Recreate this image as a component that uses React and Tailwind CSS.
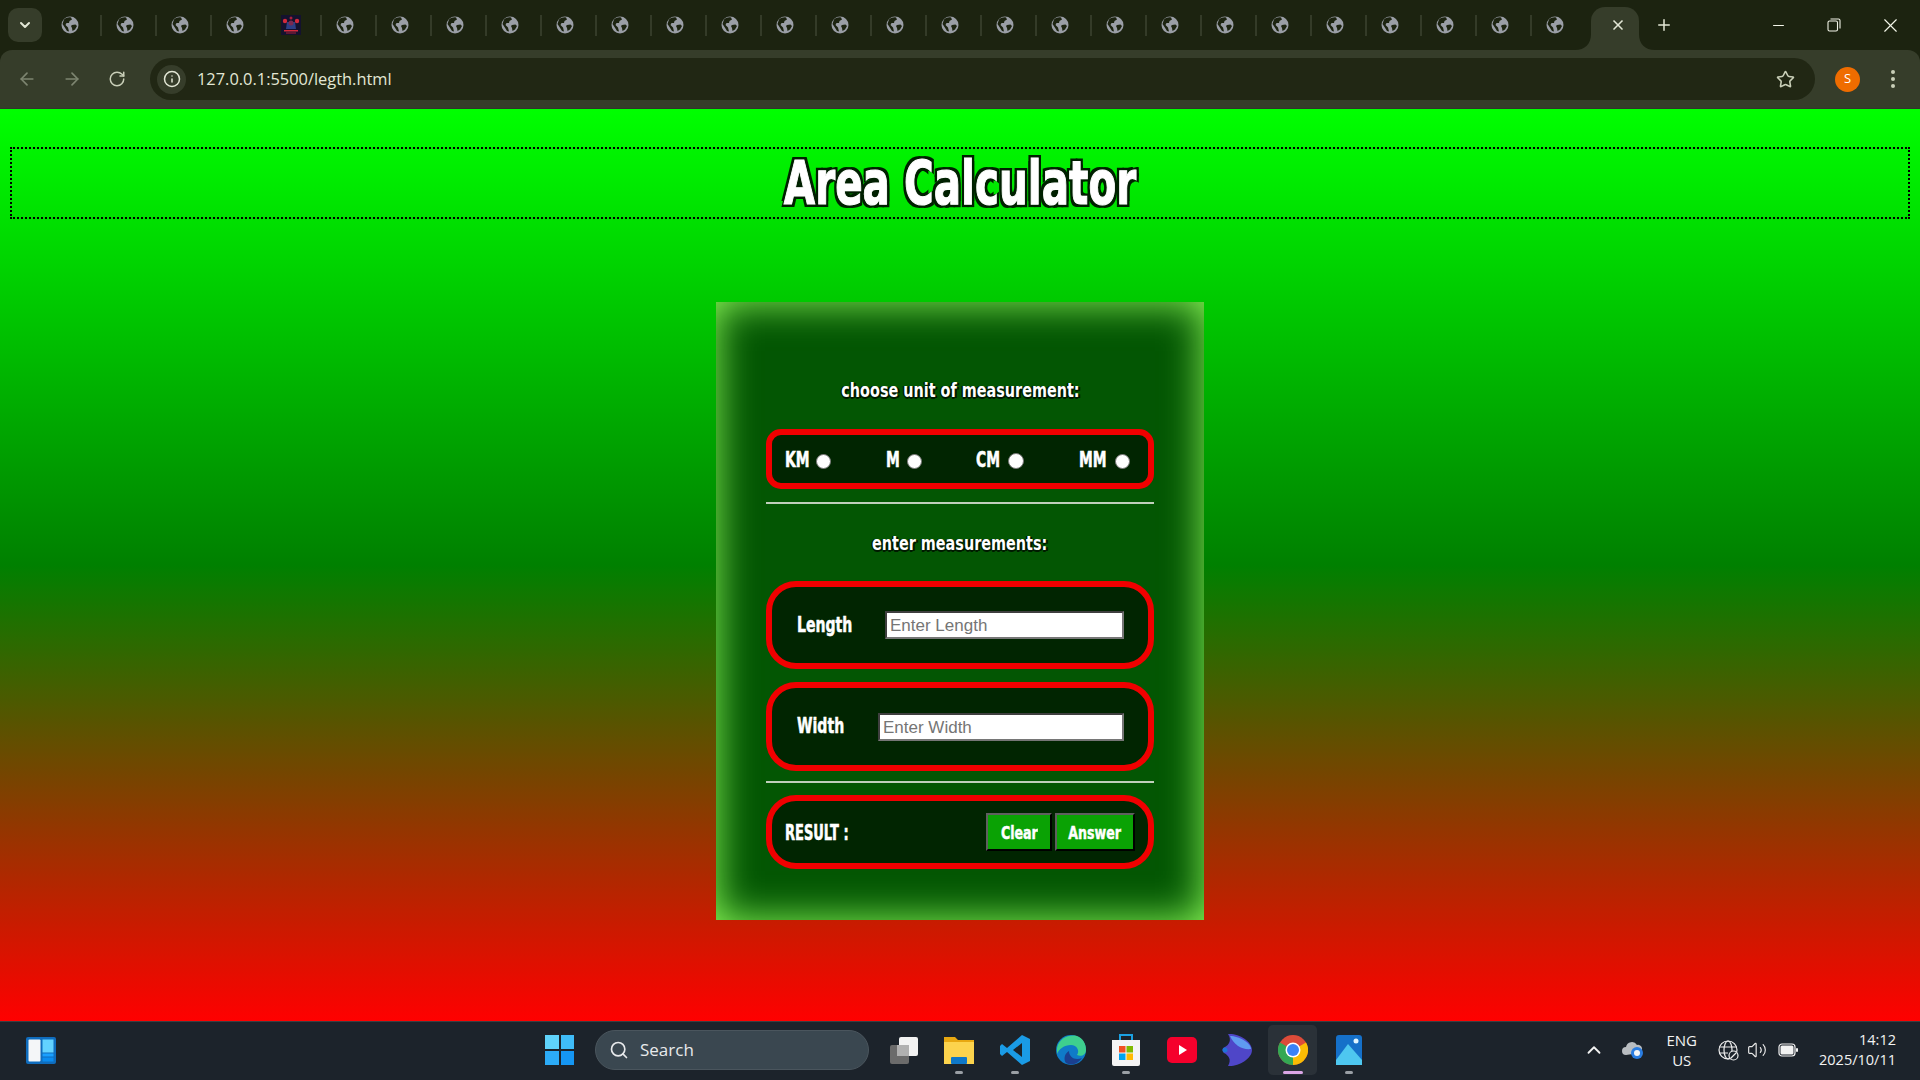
import { ArrowLeft, ArrowRight, RotateCw, Info, Star, X, Plus, Minus, ChevronDown, ChevronUp, Search, Volume2 } from "lucide-react";

// no Impact here: DejaVu bold squeezed sideways comes closest
const IMPACT = "font-['DejaVu_Sans',sans-serif] font-bold whitespace-nowrap";

function Globe() {
  return (
    <svg width="18" height="18" viewBox="0 0 18 18">
      <circle cx="9" cy="9" r="8.5" fill="#9a9ea6" />
      <path d="M3 3.5 C5 1.5 8 1 10 1.5 L11 3.5 L8.5 5 L8 7 L5.5 7 L4.5 9 L7 11.5 L8 15.5 L6 15 L3.5 11 L1.5 8 Z" fill="#1c2310" />
      <path d="M11 9 L14.5 8.5 L16 10 L14 13.5 L11.5 15 L11 12 L10 10 Z" fill="#1c2310" />
    </svg>
  );
}

function GameIcon() {
  return (
    <svg width="20" height="20" viewBox="0 0 20 20">
      <rect width="20" height="20" fill="#14122e" />
      <circle cx="4" cy="6" r="2.2" fill="#d42a3c" />
      <circle cx="16" cy="6" r="2.2" fill="#d42a3c" />
      <circle cx="10" cy="3" r="1.5" fill="#a81f3a" />
      <path d="M6 7h8l1 7H5z" fill="#2d3f86" />
      <circle cx="10" cy="8" r="2.5" fill="#7a2a50" />
      <rect x="3" y="15" width="14" height="1.5" fill="#d42a3c" />
      <rect x="5" y="17.5" width="10" height="1" fill="#a81f3a" />
    </svg>
  );
}

function Tabs() {
  const cells = Array.from({ length: 28 }, (_, i) => i);
  return (
    <div className="h-[50px] bg-[#1c2310] flex items-center">
      <div className="ml-2 mr-[5px] w-[34px] h-[34px] rounded-[10px] bg-[#363d2a] flex items-center justify-center">
        <ChevronDown size={16} strokeWidth={3} color="#e3e7d5" />
      </div>
      {cells.map((i) => (
        <div key={i} className={i < 27 ? "w-[55px] h-[21px] pl-[14px] flex items-center border-r-2 border-[#343b28]" : "w-[55px] h-[21px] pl-[14px] flex items-center"}>
          {i === 4 ? <GameIcon /> : <Globe />}
        </div>
      ))}
      <div className="relative ml-1 mt-[7px] w-[48px] h-[43px] pb-[7px] pl-[6px] bg-[#363d2a] rounded-t-[14px] flex items-center justify-center">
        <svg className="absolute bottom-0 -left-4" width="16" height="16" viewBox="0 0 16 16"><path d="M16 0 V16 H0 C10 16 16 10 16 0Z" fill="#363d2a" /></svg>
        <svg className="absolute bottom-0 -right-4" width="16" height="16" viewBox="0 0 16 16"><path d="M0 0 V16 H16 C6 16 0 10 0 0Z" fill="#363d2a" /></svg>
        <X size={16} strokeWidth={2.5} color="#e3e7d5" />
      </div>
      <div className="ml-[15px] w-[20px] flex justify-center">
        <Plus size={18} strokeWidth={2} color="#e3e7d5" />
      </div>
      <div className="ml-auto flex items-center">
        <div className="w-[56px] flex justify-center"><Minus size={17} strokeWidth={1.5} color="#f2f4e8" /></div>
        <div className="w-[56px] flex justify-center">
          <svg width="14" height="14" viewBox="0 0 14 14" fill="none" stroke="#f2f4e8" strokeWidth="1.1">
            <rect x="1" y="3" width="9.5" height="10" rx="1.5" />
            <path d="M3.5 1h8a1.5 1.5 0 0 1 1.5 1.5v8" />
          </svg>
        </div>
        <div className="w-[58px] pr-[2px] flex justify-center"><X size={23} strokeWidth={1.2} color="#f2f4e8" /></div>
      </div>
    </div>
  );
}

function Toolbar() {
  return (
    <div className="h-[59px] bg-[#363d2a] rounded-t-[12px] border-b border-[#30362a] flex items-center">
      <div className="w-[54px] flex justify-center"><ArrowLeft size={20} color="#7d8570" /></div>
      <div className="w-[36px] flex justify-center"><ArrowRight size={20} color="#7d8570" /></div>
      <div className="w-[54px] flex justify-center"><RotateCw size={18} color="#c9cfb8" /></div>
      <div className="ml-[6px] w-[1665px] h-[42px] rounded-full bg-[#212714] flex items-center pl-[7px] pr-[20px]">
        <div className="w-[29px] h-[29px] rounded-full bg-[#363d2a] flex items-center justify-center">
          <Info size={18} color="#e3e7d5" />
        </div>
        <span className="ml-[11px] text-[16.4px] text-[#e3e7d5] font-['Open_Sans',sans-serif]">127.0.0.1:5500/legth.html</span>
        <Star className="ml-auto" size={19} strokeWidth={2} color="#c9cfb8" />
      </div>
      <div className="ml-[20px] w-[25px] h-[25px] rounded-full bg-[#ef6c00] flex items-center justify-center text-white text-[13px] font-['Open_Sans',sans-serif]">S</div>
      <div className="ml-[31px] flex flex-col gap-[3px]">
        <span className="w-1 h-1 rounded-full bg-[#c9cfb8]"></span>
        <span className="w-1 h-1 rounded-full bg-[#c9cfb8]"></span>
        <span className="w-1 h-1 rounded-full bg-[#c9cfb8]"></span>
      </div>
    </div>
  );
}

function Heading({ children, className }) {
  return (
    <div className={`h-[28px] flex items-center justify-center ${className}`}>
      <p className={`${IMPACT} shrink-0 text-[20px] scale-x-[0.72] text-white [text-shadow:3px_1px_0_#001a00,-2px_0_0_#001a00,0_2px_0_#001a00]`}>
        {children}
      </p>
    </div>
  );
}

function Unit({ label, width, radio }) {
  return (
    <label className="flex items-center gap-[7px]">
      <span className={`${IMPACT} ${width} mt-[4px] text-[21px] origin-left scale-x-[0.66] text-white [-webkit-text-stroke:0.6px_#fff]`}>{label}</span>
      <input type="radio" name="unit" className={`${radio} appearance-none mt-[4px] rounded-full bg-white border border-[#777]`} />
    </label>
  );
}

function Field({ label, placeholder, inputWidth, labelWidth, height, className }) {
  return (
    <div className={`${className} ${height} border-[6px] border-[#f00000] rounded-[30px] bg-[#012501] flex items-center justify-between pl-[25px] pr-[24px]`}>
      <span className={`${IMPACT} ${labelWidth} text-[22px] origin-left scale-x-[0.64] text-white -mt-[2px] [-webkit-text-stroke:0.6px_#fff]`}>{label}</span>
      <input
        placeholder={placeholder}
        className={`${inputWidth} h-[28px] bg-white border-2 border-t-[#3f3f3f] border-l-[#3f3f3f] border-r-[#767676] border-b-[#767676] pl-[3px] pr-[2px] pt-[2px] text-[17px] text-black font-['Liberation_Sans',sans-serif] placeholder:text-[#757575] outline-none`}
      />
    </div>
  );
}

function ResultButton({ label, width }) {
  return (
    <button className={`${width} h-[38px] bg-[#0aa204] border-2 border-t-[#5f5f5f] border-l-[#5f5f5f] border-r-black border-b-black flex items-center justify-center`}>
      <span className={`${IMPACT} shrink-0 text-[18px] scale-x-[0.7] text-white [-webkit-text-stroke:0.5px_#fff]`}>{label}</span>
    </button>
  );
}

function Panel() {
  return (
    <div className="mx-auto mt-[83px] w-[488px] h-[618px] bg-[#035603] shadow-[inset_0_0_40px_#8fff5a] flex flex-col px-[50px] pt-[74px]">
      <Heading>choose unit of measurement:</Heading>
      <div className="mt-[25px] h-[60px] border-[6px] border-[#f00000] rounded-[15px] bg-[#012501] flex items-center justify-between pl-[13px] pr-[18px]">
        <Unit label="KM" width="w-[24px]" radio="w-[15px] h-[15px]" />
        <Unit label="M" width="w-[14px]" radio="w-[15px] h-[15px]" />
        <Unit label="CM" width="w-[25px]" radio="w-[16px] h-[16px]" />
        <Unit label="MM" width="w-[29px]" radio="w-[15px] h-[15px]" />
      </div>
      <div className="mt-[13px] h-[2px] bg-[#c0cfbc]"></div>
      <Heading className="mt-[25px]">enter measurements:</Heading>
      <Field className="mt-[24px]" height="h-[88px]" label="Length" labelWidth="w-[55px]" placeholder="Enter Length" inputWidth="w-[239px]" />
      <Field className="mt-[13px]" height="h-[89px]" label="Width" labelWidth="w-[49px]" placeholder="Enter Width" inputWidth="w-[246px]" />
      <div className="mt-[10px] h-[2px] bg-[#c0cfbc]"></div>
      <div className="mt-[12px] h-[74px] border-[6px] border-[#f00000] rounded-[30px] bg-[#012501] flex items-center justify-between pl-[13px] pr-[13px]">
        <span className={`${IMPACT} w-[63px] mt-[4px] text-[21px] origin-left scale-x-[0.62] text-white [-webkit-text-stroke:0.6px_#fff]`}>RESULT :</span>
        <div className="flex gap-[3px]">
          <ResultButton label="Clear" width="w-[66px]" />
          <ResultButton label="Answer" width="w-[80px]" />
        </div>
      </div>
    </div>
  );
}

function TaskIcon({ children, mark, active }) {
  return (
    <div className={active ? "relative w-[49px] h-[50px] rounded-[5px] bg-[#2a3138] flex items-center justify-center mx-[3.3px]" : "relative w-[49px] h-[50px] flex items-center justify-center mx-[3.3px]"}>
      {children}
      {mark && <span className={active ? "absolute bottom-[1px] w-5 h-[3px] rounded-full bg-[#dba6e6]" : "absolute bottom-[1px] w-[8px] h-[3px] rounded-full bg-[#9a9fa5]"}></span>}
    </div>
  );
}

function Taskbar() {
  return (
    <div className="h-[59px] bg-[#1c232b] border-t border-[#3a3f44] pb-[2px] flex items-center text-white font-['Open_Sans',sans-serif]">
      <svg className="ml-[26px]" width="30" height="27" viewBox="0 0 30 27">
        <rect width="30" height="27" rx="2" fill="#0f6cbd" />
        <rect x="2.5" y="2.5" width="12" height="22" rx="1" fill="#f4f6f8" />
        <rect x="16.5" y="2.5" width="11" height="13" fill="#62d2ff" />
        <rect x="16.5" y="16.5" width="11" height="3" fill="#1aa0ff" />
        <rect x="16.5" y="20.5" width="11" height="4" fill="#0a8cf0" />
      </svg>

      <div className="ml-[489px] w-[29px] grid grid-cols-2 gap-[2px]">
        <span className="h-[14px] bg-[#5fd3fb]"></span>
        <span className="h-[14px] bg-[#3fbcf8]"></span>
        <span className="h-[14px] bg-[#2cabf7]"></span>
        <span className="h-[14px] bg-[#1596f3]"></span>
      </div>

      <div className="ml-[21px] w-[274px] h-[40px] rounded-full bg-[#3a4750] border border-[#4a555d] flex items-center pl-[13px] gap-[11px]">
        <Search size={20} color="#e8eaec" />
        <span className="text-[17px] text-[#e8eaec]">Search</span>
      </div>

      <div className="ml-[7px] flex items-center">
        <TaskIcon>
          <svg width="30" height="30" viewBox="0 0 30 30">
            <rect x="1" y="10" width="19" height="19" rx="2" fill="#6b6b6b" />
            <rect x="10" y="2" width="19" height="19" rx="2" fill="#f2f2f2" />
            <rect x="8" y="10" width="12" height="11" fill="#b0b0b0" />
          </svg>
        </TaskIcon>
        <TaskIcon mark>
          <svg width="32" height="30" viewBox="0 0 32 30">
            <path d="M1 2h11l3 3h16v24H1z" fill="#e8a811" />
            <path d="M1 7h30v22H1z" fill="#fcd34d" />
            <rect x="8" y="22" width="16" height="7" rx="1" fill="#0f78c8" />
          </svg>
        </TaskIcon>
        <TaskIcon mark>
          <svg width="32" height="32" viewBox="0 0 32 32">
            <path d="M23 1 L31 5 V27 L23 31 L8 18 L3 22 L1 20 V12 L3 10 L8 14 Z M23 9 L14 16 L23 23 Z" fill="#1a9be6" fillRule="evenodd" />
          </svg>
        </TaskIcon>
        <TaskIcon>
          <svg width="32" height="32" viewBox="0 0 32 32">
            <circle cx="16" cy="16" r="15" fill="#0f7bc8" />
            <path d="M2 14 C4 4 14 0 22 2 C28 4 31 10 31 16 C31 21 26 23 22 21 C25 17 22 11 16 11 C9 11 4 15 2 20Z" fill="#3ecf8e" />
            <path d="M14 17 C14 23 20 27 27 24 C23 30 16 32 11 29 C8 25 10 19 14 17Z" fill="#1b3f8f" />
          </svg>
        </TaskIcon>
        <TaskIcon mark>
          <svg width="30" height="34" viewBox="0 0 30 34">
            <path d="M9 8 V2 H21 V8" fill="none" stroke="#1ba1e2" strokeWidth="2" />
            <path d="M1 7 H29 V31 a2 2 0 0 1 -2 2 H3 a2 2 0 0 1 -2 -2 Z" fill="#f4f4f4" />
            <rect x="8" y="13" width="6.5" height="6.5" fill="#f25022" />
            <rect x="15.5" y="13" width="6.5" height="6.5" fill="#7fba00" />
            <rect x="8" y="20.5" width="6.5" height="6.5" fill="#00a4ef" />
            <rect x="15.5" y="20.5" width="6.5" height="6.5" fill="#ffb900" />
          </svg>
        </TaskIcon>
        <TaskIcon>
          <svg width="30" height="30" viewBox="0 0 30 30">
            <rect y="2" width="30" height="26" rx="5" fill="#f5002c" />
            <path d="M12 10 L20 15 L12 20 Z" fill="#fff" />
          </svg>
        </TaskIcon>
        <TaskIcon>
          <svg width="30" height="34" viewBox="0 0 30 34">
            <path d="M6 1 C16 0 30 8 30 17 C30 26 16 34 6 33 C10 26 6 22 2 20 C0 18 0 15 3 14 C7 12 10 7 6 1Z" fill="#4f46c8" />
            <path d="M8 3 C17 3 29 10 29 16 C20 17 12 12 8 3Z" fill="#5f9bf0" />
            <circle cx="3" cy="17" r="2.5" fill="#1f73d8" />
          </svg>
        </TaskIcon>
        <TaskIcon active mark>
          <svg width="30" height="30" viewBox="0 0 30 30">
            <circle cx="15" cy="15" r="15" fill="#dd4b39" />
            <path d="M15 15 L2 7.5 A15 15 0 0 0 15 30 Z" fill="#34a853" />
            <path d="M15 15 L15 30 A15 15 0 0 0 28 7.5 Z" fill="#fbbc04" />
            <circle cx="15" cy="15" r="7.5" fill="#fff" />
            <circle cx="15" cy="15" r="6" fill="#3b82f6" />
          </svg>
        </TaskIcon>
        <TaskIcon mark>
          <svg width="26" height="30" viewBox="0 0 26 30">
            <rect width="26" height="30" rx="3" fill="#1570c9" />
            <path d="M0 25 L12 9 L26 25 V30 H0Z" fill="#4ec7f0" />
            <circle cx="20" cy="6" r="2.5" fill="#dff4ff" />
          </svg>
        </TaskIcon>
      </div>

      <div className="ml-auto flex items-center h-full">
        <ChevronUp size={22} strokeWidth={2} color="#f2f2f2" />
        <svg className="ml-[17px]" width="22" height="20" viewBox="0 0 22 20">
          <path d="M4 15 a4 4 0 0 1 0 -8 a6 6 0 0 1 11 -2 a4 4 0 0 1 2 8 z" fill="#b9bdc1" />
          <circle cx="15" cy="13" r="6" fill="#2a7de1" />
          <circle cx="15" cy="13" r="3" fill="#f4f6f8" />
        </svg>
        <div className="ml-[22px] flex flex-col items-center text-[15px] leading-[20px] text-[#f2f2f2]">
          <span>ENG</span>
          <span>US</span>
        </div>
        <svg className="ml-[21px]" width="21" height="21" viewBox="0 0 21 21" fill="none" stroke="#eeeeee" strokeWidth="1.2">
          <circle cx="10" cy="10" r="9" />
          <ellipse cx="10" cy="10" rx="4" ry="9" />
          <path d="M1 7h18M1 13h9" />
          <circle cx="15.5" cy="15.5" r="4.5" fill="#1c232b" />
          <path d="M12.5 18.5l6-6" />
        </svg>
        <Volume2 className="ml-[8px]" size={20} strokeWidth={1.4} color="#e8e8e8" />
        <svg className="ml-[11px]" width="20" height="14" viewBox="0 0 20 14">
          <rect x="1" y="1" width="16" height="12" rx="3" fill="none" stroke="#f2f2f2" strokeWidth="1.2" />
          <rect x="2.5" y="2.5" width="13" height="9" rx="1.5" fill="#f2f2f2" />
          <rect x="18" y="5" width="2" height="4" rx="1" fill="#f2f2f2" />
        </svg>
        <div className="ml-[21px] mr-[24px] flex flex-col items-end text-[14.5px] leading-[20px] text-[#f2f2f2]">
          <span>14:12</span>
          <span>2025/10/11</span>
        </div>
      </div>
    </div>
  );
}

export default function App() {
  return (
    <div className="h-screen overflow-hidden flex flex-col bg-[#1c2310]">
      <Tabs />
      <Toolbar />
      <main className="h-[912px] bg-linear-to-b/srgb from-[#00ff00] via-[#008000] to-[#ff0000] pt-[38px]">
        <div className="mx-[10px] h-[72px] border-2 border-dotted border-black flex items-center justify-center">
          <h1 className={`${IMPACT} text-[60px] leading-none scale-x-[0.675] text-white [-webkit-text-stroke:1.2px_#fff] [text-shadow:4px_3px_0_#002000,-4px_-3px_0_#002000,4px_-3px_0_#002000,-4px_3px_0_#002000]`}>Area Calculator</h1>
        </div>
        <Panel />
      </main>
      <Taskbar />
    </div>
  );
}
